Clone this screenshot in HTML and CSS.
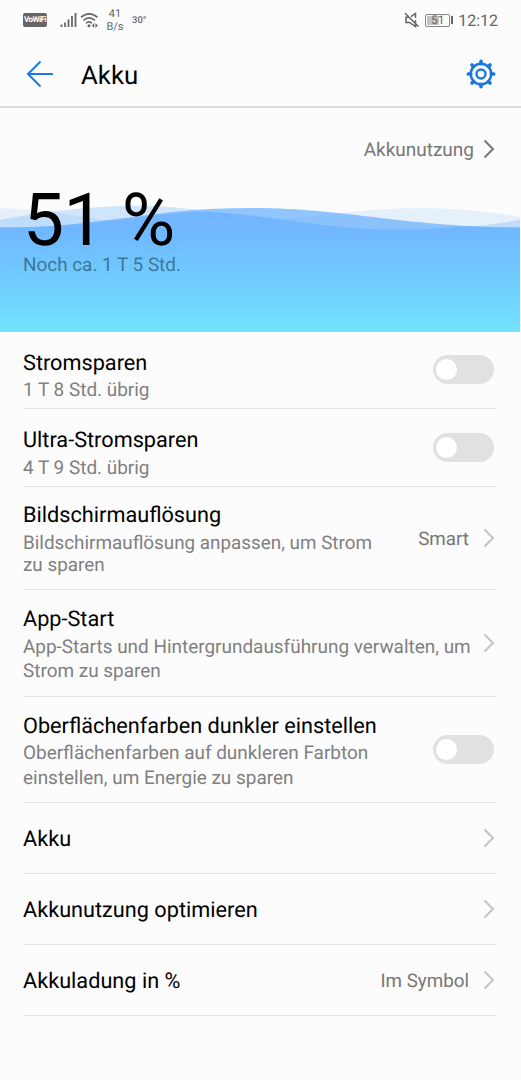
FILE: index.html
```html
<!DOCTYPE html>
<html lang="de">
<head>
  <meta charset="UTF-8">
  <title>Akku</title>
  <meta name="viewport" content="width=device-width, initial-scale=1">
  <link rel="stylesheet" href="styles.css">
</head>
<body>
  <div class="status-bar">
    <span class="vowifi">VoWiFi</span>
    <svg class="signal" width="17" height="16" viewBox="0 0 17 16">
      <path d="M1.500 12.500v2.500M5 10.500v4.500M8.500 7.500v7.500M12 4v11M15.500 1v14" stroke="#666" stroke-width="1.800" fill="none"/>
    </svg>
    <svg class="wifi" width="19" height="17" viewBox="0 0 19 17">
      <path d="M1 5.300Q9 -1.700 17.500 5.300M3.500 8.300Q9 3.500 15 8.300M6 11.300Q9 8.300 12 11.300" stroke="#666" stroke-width="1.600" fill="none"/>
      <circle cx="9" cy="13.700" r="1.500" fill="#666"/>
      <path d="M14.200 11v5l-2.400-2.500zM15.400 11v5l2.400-2.500z" fill="#666"/>
    </svg>
    <span class="speed">41<br>B/s</span>
    <span class="temp">30°</span>
    <span class="spacer"></span>
    <svg class="mute" width="16" height="16" viewBox="0 0 16 16">
      <path d="M4.500 5.300H2v5.200h3.500l6 4V8M7 4.700L11.500 1.500V6M1 1.200l13.500 13.300" stroke="#666" stroke-width="1.500" fill="none"/>
    </svg>
    <span class="battery"><span class="battery-box"><span class="battery-fill"></span><span class="battery-text">51</span></span><span class="battery-tip"></span></span>
    <span class="clock">12:12</span>
  </div>

  <div class="header">
    <svg class="back" width="28" height="28" viewBox="0 0 28 28">
      <path d="M14.500 1.500L2 14l12.500 12.500M2 14h25" stroke="#1c7be0" stroke-width="2" fill="none"/>
    </svg>
    <h1>Akku</h1>
    <svg class="gear" width="30" height="30" viewBox="0 0 30 30">
      <g stroke="#1978de" fill="none">
        <circle cx="15" cy="15" r="10.300" stroke-width="2.400"/>
        <circle cx="15" cy="15" r="4.500" stroke-width="2.400"/>
        <path d="M15 2.300v2.500M15 25.200v2.500M2.300 15h2.500M25.200 15h2.500M6 6l1.500 1.500M22.500 22.500l1.500 1.500M6 24l1.500-1.500M22.500 7.500l1.500-1.500" stroke-width="3.600" stroke-linecap="round"/>
      </g>
    </svg>
  </div>

  <div class="hero">
    <svg class="waves" viewBox="0 0 520 132" width="520" height="132" preserveAspectRatio="none">
      <defs>
        <linearGradient id="water" gradientUnits="userSpaceOnUse" x1="0" y1="8" x2="0" y2="132">
          <stop offset="0" stop-color="#74b4ff"/>
          <stop offset="0.200" stop-color="#70b8ff"/>
          <stop offset="1" stop-color="#72e3ff"/>
        </linearGradient>
      </defs>
      <path d="M0 8C70 10 110 26 180 26C270 26 340 8 420 8C460 8 500 13 520 17V132H0z" fill="#77b4fa" opacity="0.160"/>
      <path d="M0 19.700C40 12 90 6 135 5.700C220 6 290 29.500 400 29.700C445 29.500 490 26 520 19.500V132H0z" fill="#68b0fc" opacity="0.300"/>
      <path d="M0 27.500C100 28 150 8 250 8C350 8 400 27 520 27.500V132H0z" fill="#68b0ff" opacity="0.720"/>
      <path d="M0 27.500C70 28 110 20 180 13C215 9.500 250 15 290 20.500C320 25 355 29.700 400 29.700C425 29.700 440 28.500 461 26C480 27 500 27.500 520 27.500V132H0z" fill="url(#water)"/>
    </svg>
    <a class="usage">Akkunutzung
      <svg class="chevron" width="12" height="20" viewBox="0 0 12 20"><path d="M1.500 1.500L10 10l-8.500 8.500"/></svg>
    </a>
    <div class="percent">51 %</div>
    <div class="remaining">Noch ca. 1 T 5 Std.</div>
  </div>

  <div class="list">
    <div class="row row-toggle">
      <div class="text">
        <div class="title">Stromsparen</div>
        <div class="sub">1 T 8 Std. übrig</div>
      </div>
      <span class="switch"></span>
    </div>
    <div class="row row-toggle ultra">
      <div class="text">
        <div class="title">Ultra-Stromsparen</div>
        <div class="sub">4 T 9 Std. übrig</div>
      </div>
      <span class="switch"></span>
    </div>
    <div class="row resolution">
      <div class="text">
        <div class="title">Bildschirmauflösung</div>
        <div class="sub">Bildschirmauflösung anpassen, um Strom<br>zu sparen</div>
      </div>
      <span class="value">Smart</span>
      <svg class="chevron" width="12" height="20" viewBox="0 0 12 20"><path d="M1.500 1.500L10 10l-8.500 8.500"/></svg>
    </div>
    <div class="row app-start">
      <div class="text">
        <div class="title">App-Start</div>
        <div class="sub">App-Starts und Hintergrundausführung verwalten, um<br>Strom zu sparen</div>
      </div>
      <svg class="chevron" width="12" height="20" viewBox="0 0 12 20"><path d="M1.500 1.500L10 10l-8.500 8.500"/></svg>
    </div>
    <div class="row dark">
      <div class="text">
        <div class="title">Oberflächenfarben dunkler einstellen</div>
        <div class="sub">Oberflächenfarben auf dunkleren Farbton<br>einstellen, um Energie zu sparen</div>
      </div>
      <span class="switch"></span>
    </div>
    <div class="row single">
      <div class="text"><div class="title">Akku</div></div>
      <svg class="chevron" width="12" height="20" viewBox="0 0 12 20"><path d="M1.500 1.500L10 10l-8.500 8.500"/></svg>
    </div>
    <div class="row single">
      <div class="text"><div class="title">Akkunutzung optimieren</div></div>
      <svg class="chevron" width="12" height="20" viewBox="0 0 12 20"><path d="M1.500 1.500L10 10l-8.500 8.500"/></svg>
    </div>
    <div class="row single">
      <div class="text"><div class="title">Akkuladung in %</div></div>
      <span class="value">Im Symbol</span>
      <svg class="chevron" width="12" height="20" viewBox="0 0 12 20"><path d="M1.500 1.500L10 10l-8.500 8.500"/></svg>
    </div>
  </div>
</body>
</html>
```

FILE: styles.css
```css
* {
  box-sizing: border-box;
}
body {
  font-family: Roboto, "Liberation Sans", sans-serif;
  background: #fcfcfc;
  margin: 0;
  color: #000;
  height: 1080px;
  overflow: hidden;
  text-rendering: geometricPrecision;
}
svg {
  display: block;
  flex: none;
}
.status-bar {
  height: 40px;
  padding: 0 23px 0 23px;
  display: flex;
  align-items: center;
  color: #666;
}
.vowifi {
  width: 24px;
  height: 14px;
  border-radius: 2px;
  background: #666;
  color: #fff;
  font-size: 8px;
  font-weight: 700;
  line-height: 14px;
  text-align: center;
  letter-spacing: -0.5px;
}
.signal {
  margin-left: 13px;
}
.wifi {
  margin-left: 3px;
}
.speed {
  width: 18px;
  margin-left: 7px;
  font-size: 11px;
  line-height: 13px;
  text-align: center;
}
.temp {
  margin-left: 8px;
  font-size: 9.5px;
  font-weight: 500;
}
.spacer {
  flex: 1;
}
.battery {
  display: flex;
  align-items: center;
  gap: 1px;
  margin-left: 5px;
}
.battery-box {
  display: flex;
  position: relative;
  width: 25px;
  height: 13px;
  padding: 1px;
  border: 1px solid #888;
  border-radius: 2px;
}
.battery-fill {
  width: 12px;
  background: #c4c4c4;
}
.battery-text {
  position: absolute;
  left: 0;
  right: 0;
  top: 0;
  font-size: 12px;
  line-height: 11px;
  text-align: center;
}
.battery-tip {
  width: 2px;
  height: 8px;
  background: #666;
}
.clock {
  margin-left: 5px;
  font-size: 16px;
}
.header {
  height: 68px;
  padding: 1px 25.5px 0 26px;
  display: flex;
  align-items: center;
  border-bottom: 2px solid #dcdcdc;
}
.header h1 {
  margin: 4px 0 0 27px;
  flex: 1;
  font-size: 25.8px;
  font-weight: 400;
}
.hero {
  position: relative;
  height: 224px;
  padding: 29px 26px 0 23px;
}
/* water behind the percentage */
.waves {
  position: absolute;
  left: 0;
  bottom: 0;
  z-index: -1;
}
.chevron path {
  fill: none;
  stroke: #c4c4c4;
  stroke-width: 2;
}
.usage {
  display: flex;
  justify-content: flex-end;
  align-items: center;
  gap: 9px;
  height: 24px;
  font-size: 19px;
  color: #777;
}
.usage .chevron path {
  stroke: #777;
}
.percent {
  margin-top: 27px;
  font-size: 73px;
  line-height: 64px;
  letter-spacing: -0.5px;
}
.remaining {
  margin-top: 1px;
  font-size: 18.9px;
  line-height: 24px;
  color: #3d7896;
}
.list {
  padding: 0 24px 0 23px;
}
.row {
  display: flex;
  align-items: center;
  height: 71px;
  border-bottom: 1px solid #e2e2e2;
}
.text {
  flex: 1;
  align-self: flex-start;
  white-space: nowrap;
}
.title {
  font-size: 21.7px;
  line-height: 30px;
}
.sub {
  font-size: 18.95px;
  line-height: 24.5px;
  color: #808080;
}
.row-toggle {
  height: 77px;
}
.row-toggle .text {
  padding-top: 17px;
}
.row-toggle .sub {
  margin-top: -1px;
}
.ultra {
  height: 78px;
}
.ultra .sub {
  margin-top: -0.5px;
}
.resolution {
  height: 103px;
}
.resolution .text {
  padding-top: 14px;
}
.resolution .sub {
  padding-top: 0.5px;
  font-size: 18.85px;
  line-height: 22.5px;
}
.app-start {
  height: 107px;
}
.app-start .text {
  padding-top: 15px;
}
.app-start .sub {
  margin-top: -0.5px;
}
.dark {
  height: 106px;
}
.dark .text {
  padding-top: 15px;
}
.dark .sub {
  margin-top: -1px;
}
.single .text {
  padding-top: 22px;
}
.value {
  font-size: 18.8px;
  color: #777;
  margin: 1.5px 14px 0 0;
}
.row .chevron {
  margin-right: 2px;
}
.switch {
  width: 61px;
  height: 29px;
  margin: 0 3.5px 1px 0;
  padding: 4px 3px;
  border-radius: 15px;
  background: #e1e1e1;
}
.switch::before {
  content: "";
  display: block;
  width: 21px;
  height: 21px;
  border-radius: 50%;
  background: #fff;
}
```
